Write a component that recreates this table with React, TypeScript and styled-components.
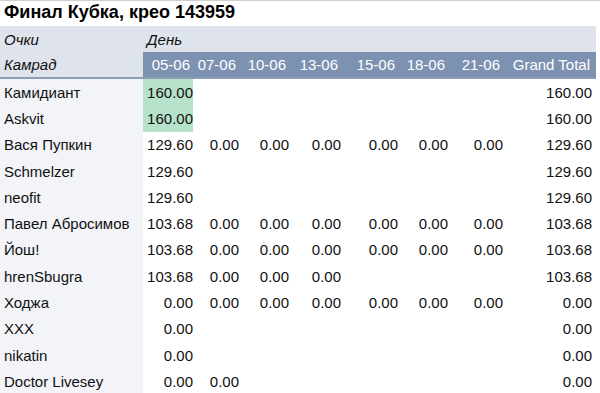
import React from 'react';
import styled, { createGlobalStyle, css } from 'styled-components';

const GlobalStyle = createGlobalStyle`
  html, body { margin: 0; padding: 0; background: #fff; }
  body { font-family: "Liberation Sans", Arial, sans-serif; font-size: 15px; color: #111; }
`;

const COLS = '143px 50px 46px 50px 52px 57px 50px 55px 93px';

const DAYS = ['05-06', '07-06', '10-06', '13-06', '15-06', '18-06', '21-06'];

type Row = { name: string; vals: (string | null)[]; total: string; hl?: boolean };

const ROWS: Row[] = [
  { name: 'Камидиант', vals: ['160.00'], total: '160.00', hl: true },
  { name: 'Askvit', vals: ['160.00'], total: '160.00', hl: true },
  { name: 'Вася Пупкин', vals: ['129.60', '0.00', '0.00', '0.00', '0.00', '0.00', '0.00'], total: '129.60' },
  { name: 'Schmelzer', vals: ['129.60'], total: '129.60' },
  { name: 'neofit', vals: ['129.60'], total: '129.60' },
  { name: 'Павел Абросимов', vals: ['103.68', '0.00', '0.00', '0.00', '0.00', '0.00', '0.00'], total: '103.68' },
  { name: 'Йош!', vals: ['103.68', '0.00', '0.00', '0.00', '0.00', '0.00', '0.00'], total: '103.68' },
  { name: 'hrenSbugra', vals: ['103.68', '0.00', '0.00', '0.00'], total: '103.68' },
  { name: 'Ходжа', vals: ['0.00', '0.00', '0.00', '0.00', '0.00', '0.00', '0.00'], total: '0.00' },
  { name: 'XXX', vals: ['0.00'], total: '0.00' },
  { name: 'nikatin', vals: ['0.00'], total: '0.00' },
  { name: 'Doctor Livesey', vals: ['0.00', '0.00'], total: '0.00' },
];

const Page = styled.div`
  width: 600px;
  height: 393px;
  overflow: hidden;
  border-top: 1px solid #cfcfcf;
  box-sizing: border-box;
`;

const Title = styled.div`
  height: 25px;
  line-height: 23px;
  padding-left: 4px;
  font-weight: bold;
  font-size: 18px;
  color: #000;
`;

const Grid = styled.div<{ $h?: number; $line?: boolean }>`
  display: grid;
  grid-template-columns: ${COLS};
  width: 596px;
  height: ${p => p.$h ?? 26.3}px;
  align-items: stretch;
  ${p => p.$line && css`border-bottom: 2px solid #8d9cb7;`}
`;

const HeadCell = styled.div<{ $dark?: boolean; $span?: number }>`
  display: flex;
  align-items: center;
  padding: 0 4px;
  background: ${p => (p.$dark ? '#7d91b1' : '#dfe3ec')};
  color: ${p => (p.$dark ? '#fff' : '#111')};
  font-style: ${p => (p.$dark ? 'normal' : 'italic')};
  justify-content: ${p => (p.$dark ? 'flex-end' : 'flex-start')};
  ${p => p.$span && css`grid-column: span ${p.$span};`}
  ${p => p.$dark && css`padding: 0 3px 0 0;`}
`;

const NameCell = styled.div`
  display: flex;
  align-items: center;
  padding-left: 4px;
  background: #f2f4f8;
  white-space: nowrap;
`;

const NumCell = styled.div<{ $hl?: boolean }>`
  display: flex;
  align-items: center;
  justify-content: flex-end;
  background: ${p => (p.$hl ? '#b6e1cb' : '#fff')};
`;

const TotalCell = styled(NumCell)`
  padding-right: 4px;
`;

export default function App() {
  return (
    <Page>
      <GlobalStyle />
      <Title>Финал Кубка, крео 143959</Title>
      <Grid $h={26}>
        <HeadCell>Очки</HeadCell>
        <HeadCell $span={8}>День</HeadCell>
      </Grid>
      <Grid $h={25} $line>
        <HeadCell>Камрад</HeadCell>
        {DAYS.map(d => (
          <HeadCell key={d} $dark>{d}</HeadCell>
        ))}
        <HeadCell $dark style={{ paddingRight: 6 }}>Grand Total</HeadCell>
      </Grid>
      {ROWS.map(r => (
        <Grid key={r.name}>
          <NameCell>{r.name}</NameCell>
          {DAYS.map((d, i) => (
            <NumCell key={d} $hl={r.hl && i === 0}>{r.vals[i] ?? ''}</NumCell>
          ))}
          <TotalCell>{r.total}</TotalCell>
        </Grid>
      ))}
    </Page>
  );
}
